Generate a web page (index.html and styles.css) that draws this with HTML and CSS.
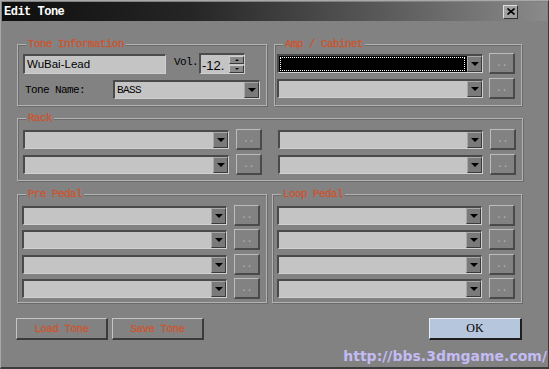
FILE: index.html
```html
<!DOCTYPE html>
<html lang="en">
<head>
  <meta charset="UTF-8">
  <title>Edit Tone</title>
  <link rel="stylesheet" href="styles.css">
</head>
<body>
  <div class="window">
    <div class="titlebar">
      <span class="title">Edit Tone</span>
      <span class="close">
        <svg width="8" height="7" viewBox="0 0 8 7"><path d="M0.5 0.5 L7.5 6.5 M7.5 0.5 L0.5 6.5" stroke="#000" stroke-width="1.6"/></svg>
      </span>
    </div>

    <div class="client">
      <!-- Tone info + amp -->
      <div class="row row-top">
        <div class="group group-tone">
          <span class="legend">Tone Information</span>
          <div class="line">
            <div class="field name-field">WuBai-Lead</div>
            <span class="lbl vol-lbl">Vol.</span>
            <div class="spin">
              <span class="spin-text">-12.</span>
              <div class="spin-btns">
                <span class="spin-btn"><i class="tri-up"></i></span>
                <span class="spin-btn"><i class="tri-down"></i></span>
              </div>
            </div>
          </div>
          <div class="line line-name">
            <span class="lbl name-lbl">Tone Name:</span>
            <div class="combo tone-combo"><span class="combo-text">BASS</span><span class="arrow"><i></i></span></div>
          </div>
        </div>

        <div class="group group-amp">
          <span class="legend">Amp / Cabinet</span>
          <div class="slot">
            <div class="combo focused"><span class="focus-box"></span><span class="arrow"><i></i></span></div>
            <span class="dots">..</span>
          </div>
          <div class="slot">
            <div class="combo"><span class="arrow"><i></i></span></div>
            <span class="dots">..</span>
          </div>
        </div>
      </div>

      <!-- Rack -->
      <div class="group group-rack">
        <span class="legend">Rack</span>
        <div class="rack-cols">
          <div class="col">
            <div class="slot"><div class="combo"><span class="arrow"><i></i></span></div><span class="dots">..</span></div>
            <div class="slot"><div class="combo"><span class="arrow"><i></i></span></div><span class="dots">..</span></div>
          </div>
          <div class="col">
            <div class="slot"><div class="combo"><span class="arrow"><i></i></span></div><span class="dots">..</span></div>
            <div class="slot"><div class="combo"><span class="arrow"><i></i></span></div><span class="dots">..</span></div>
          </div>
        </div>
      </div>

      <!-- Pedals -->
      <div class="row row-pedal">
        <div class="group group-pedal">
          <span class="legend">Pre Pedal</span>
          <div class="slot"><div class="combo"><span class="arrow"><i></i></span></div><span class="dots">..</span></div>
          <div class="slot"><div class="combo"><span class="arrow"><i></i></span></div><span class="dots">..</span></div>
          <div class="slot"><div class="combo"><span class="arrow"><i></i></span></div><span class="dots">..</span></div>
          <div class="slot"><div class="combo"><span class="arrow"><i></i></span></div><span class="dots">..</span></div>
        </div>
        <div class="group group-pedal">
          <span class="legend">Loop Pedal</span>
          <div class="slot"><div class="combo"><span class="arrow"><i></i></span></div><span class="dots">..</span></div>
          <div class="slot"><div class="combo"><span class="arrow"><i></i></span></div><span class="dots">..</span></div>
          <div class="slot"><div class="combo"><span class="arrow"><i></i></span></div><span class="dots">..</span></div>
          <div class="slot"><div class="combo"><span class="arrow"><i></i></span></div><span class="dots">..</span></div>
        </div>
      </div>

      <!-- Bottom buttons -->
      <div class="actions">
        <button class="btn">Load Tone</button>
        <button class="btn">Save Tone</button>
        <button class="btn btn-ok">OK</button>
      </div>
    </div>

    <div class="watermark">http://bbs.3dmgame.com/</div>
  </div>
</body>
</html>
```

FILE: styles.css
```css
/* Reset */
*, *::before, *::after { margin: 0; padding: 0; box-sizing: border-box; }
body {
  width: 549px;
  height: 369px;
  overflow: hidden;
  background: #808080;
  font-family: 'Liberation Mono', monospace;
  font-size: 11px;
  letter-spacing: -0.6px;
  color: #000;
}
.window {
  position: relative;
  width: 549px;
  height: 369px;
  background: #828282;
  border-top: 1px solid #a8a8a8;
  border-left: 1px solid #a8a8a8;
  border-right: 1px solid #3c3c3c;
  border-bottom: 2px solid #3c3c3c;
  padding: 1px;
}
/* Title bar */
.titlebar {
  height: 19px;
  display: flex;
  align-items: center;
  padding-left: 2px;
  background: linear-gradient(to right, #0e0e0e 0%, #262626 35%, #5a5a5a 70%, #8a8a8a 100%);
}
.title {
  flex: 1;
  color: #fff;
  font-weight: bold;
  font-size: 12px;
  letter-spacing: -0.5px;
}
.close {
  width: 15px;
  height: 14px;
  margin-right: 29px;
  display: flex;
  align-items: center;
  justify-content: center;
  background: #a0a0a0;
  border-top: 1px solid #e0e0e0;
  border-left: 1px solid #e0e0e0;
  border-right: 1px solid #303030;
  border-bottom: 1px solid #303030;
}
/* Client area */
.client {
  padding: 23px 0 0 15px;
}
.row {
  display: flex;
}
.row-top { gap: 7px; height: 62px; }
.row-pedal { gap: 5px; margin-top: 13px; }

.group {
  position: relative;
  border: 1px solid #b2b2b2;
  box-shadow: inset 1px 1px 0 #6a6a6a, 1px 1px 0 #6a6a6a;
}
.legend {
  position: absolute;
  top: -7px;
  left: 8px;
  padding: 0 2px;
  background: #828282;
  color: #cc5530;
  -webkit-text-stroke: 0.3px #cc5530;
  line-height: 12px;
}

/* Tone information */
.group-tone { width: 250px; padding: 8px 0 0 5px; }
.line { display: flex; align-items: center; }
.line-name { margin-top: 6px; }
.field {
  height: 20px;
  background: #c4c4c4;
  border-top: 2px solid #4c4c4c;
  border-left: 2px solid #4c4c4c;
  border-bottom: 1px solid #cfcfcf;
  border-right: 1px solid #cfcfcf;
  font-family: 'Liberation Sans', sans-serif;
  font-size: 11.5px;
  letter-spacing: 0;
  line-height: 17px;
  padding-left: 2px;
}
.name-field { width: 143px; }
.vol-lbl { margin: 0 1px 4px 8px; width: 24px; }
.name-lbl { margin-left: 2px; width: 88px; }
.spin {
  width: 46px;
  height: 21px;
  display: flex;
  align-items: center;
  justify-content: space-between;
  background: #c4c4c4;
  border-top: 2px solid #4c4c4c;
  border-left: 2px solid #4c4c4c;
  border-bottom: 1px solid #cfcfcf;
  border-right: 1px solid #cfcfcf;
  padding: 0 0 0 1px;
}
.spin-text {
  font-family: 'Liberation Sans', sans-serif;
  font-size: 13px;
  letter-spacing: 0;
  padding-top: 2px;
}
.spin-btns { display: flex; flex-direction: column; gap: 1px; }
.spin-btn {
  width: 15px;
  height: 8px;
  display: flex;
  align-items: center;
  justify-content: center;
  background: #8a8a8a;
  border-top: 1px solid #cfcfcf;
  border-left: 1px solid #cfcfcf;
  border-right: 1px solid #3a3a3a;
  border-bottom: 1px solid #3a3a3a;
}
.tri-up, .tri-down {
  width: 0;
  height: 0;
  border-left: 2px solid transparent;
  border-right: 2px solid transparent;
}
.tri-up { border-bottom: 2px solid #000; }
.tri-down { border-top: 2px solid #000; }

/* Combo boxes */
.combo {
  width: 206px;
  height: 19px;
  display: flex;
  align-items: center;
  background: #c4c4c4;
  border-top: 2px solid #4a4a4a;
  border-left: 2px solid #4a4a4a;
  border-bottom: 1px solid #d0d0d0;
  border-right: 1px solid #d0d0d0;
}
.combo-text { flex: 1; padding-left: 2px; }
.combo .arrow { margin-left: auto; }
.arrow {
  width: 15px;
  height: 16px;
  display: flex;
  align-items: center;
  justify-content: center;
  background: #7a7a7a;
  border-top: 1px solid #a8a8a8;
  border-left: 1px solid #a8a8a8;
  border-right: 1px solid #3a3a3a;
  border-bottom: 1px solid #3a3a3a;
}
.arrow i {
  width: 0;
  height: 0;
  border-left: 4px solid transparent;
  border-right: 4px solid transparent;
  border-top: 4px solid #000;
}
.tone-combo { width: 147px; }
.combo.focused { background: #000; }
.focus-box {
  flex: 1;
  align-self: stretch;
  margin: 1px 2px 1px 1px;
  border: 1px dotted #fff;
}

.dots {
  width: 26px;
  height: 21px;
  display: flex;
  align-items: flex-end;
  justify-content: center;
  padding-bottom: 3px;
  color: #b4b4b4;
  font-size: 10px;
  line-height: 10px;
  border-top: 1px solid #bcbcbc;
  border-left: 1px solid #bcbcbc;
  border-right: 2px solid #4a4a4a;
  border-bottom: 2px solid #4a4a4a;
}
.slot {
  display: flex;
  align-items: center;
  gap: 6px;
  height: 20px;
}

/* Amp / cabinet */
.group-amp {
  width: 248px;
  padding: 8px 0 0 2px;
  display: flex;
  flex-direction: column;
  gap: 5px;
}

/* Rack */
.group-rack {
  width: 506px;
  height: 63px;
  margin-top: 12px;
  padding: 10px 0 0 5px;
}
.rack-cols { display: flex; gap: 16px; }
.col { display: flex; flex-direction: column; gap: 5px; }
.group-rack .col .slot { gap: 7px; }
.group-rack .col:last-child .combo { width: 205px; }

/* Pedals */
.group-pedal {
  width: 250px;
  height: 109px;
  padding: 10px 0 0 4px;
  display: flex;
  flex-direction: column;
  gap: 4.6px;
}
.group-pedal .combo { width: 205px; }
.group-pedal .slot { gap: 7px; }

/* Buttons */
.actions {
  display: flex;
  gap: 4px;
  margin: 15px 0 0 -1px;
  width: 506px;
}
.btn {
  width: 92px;
  height: 22px;
  background: #828282;
  color: #cc5530;
  -webkit-text-stroke: 0.3px #cc5530;
  font-family: 'Liberation Mono', monospace;
  font-size: 11px;
  letter-spacing: -0.6px;
  border-top: 1px solid #c4c4c4;
  border-left: 1px solid #c4c4c4;
  border-right: 2px solid #3a3a3a;
  border-bottom: 2px solid #3a3a3a;
}
.btn-ok {
  margin-left: auto;
  width: 93px;
  background: #b6c6dc;
  color: #000;
  -webkit-text-stroke: 0;
  font-family: 'Liberation Serif', serif;
  font-size: 12px;
  letter-spacing: 0;
  border-top: 1px solid #e4ecf4;
  border-left: 1px solid #e4ecf4;
  border-right: 2px solid #1e1e1e;
  border-bottom: 2px solid #1e1e1e;
}

/* Watermark */
.watermark {
  position: absolute;
  right: 1px;
  top: 347px;
  color: #c2bbf4;
  font-family: 'DejaVu Sans', sans-serif;
  font-weight: bold;
  font-size: 14px;
  letter-spacing: 0;
  line-height: 16px;
}
```
